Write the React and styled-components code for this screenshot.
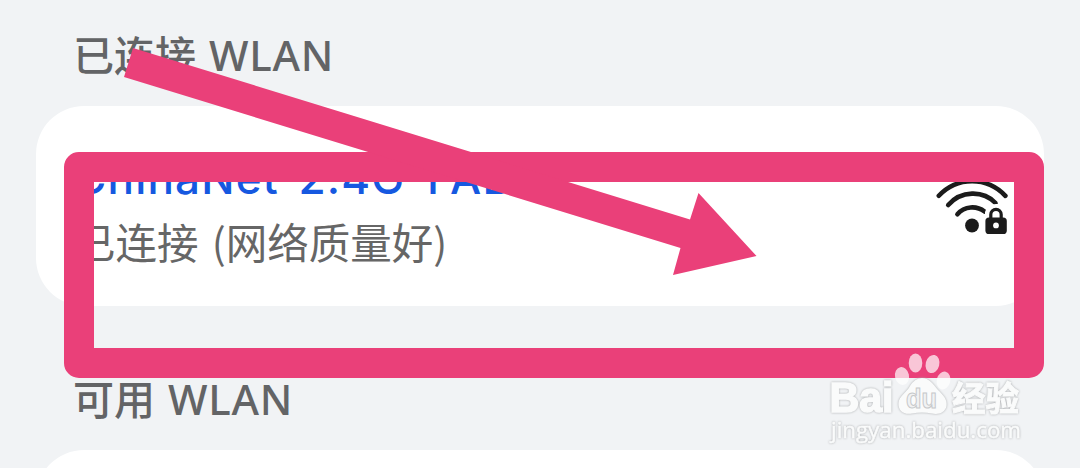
import styled, { createGlobalStyle } from "styled-components";

const GlobalStyle = createGlobalStyle`
    body {
        margin: 0;
        background: #F1F3F5;
        font-family: "Noto Sans", "Noto Sans CJK SC", sans-serif;
    }
`

const Screen = styled.main`
    position: relative;
    display: flex;
    flex-direction: column;
    box-sizing: border-box;
    width: 1080px;
    height: 468px;
    padding: 0px 36px;
    overflow: hidden;
    background: #F1F3F5;
`

const SectionTitle = styled.h2`
    display: flex;
    align-items: flex-end;
    flex: none;
    box-sizing: border-box;
    height: ${props => props.$height}px;
    margin: 0px;
    padding: 0px 0px 21px 37px;
    font-weight: 500;
    font-size: 41px;
    line-height: 60px;
    color: #636466;
    white-space: pre;
`

const Latin = styled.span`
    font-size: 42px;
    letter-spacing: 0.8px;
    margin-left: 13px;
`

const Card = styled.section`
    display: flex;
    justify-content: space-between;
    flex: none;
    box-sizing: border-box;
    height: 200px;
    padding: 41px 36px 0px 38px;
    border-radius: 48px;
    background: #FFFFFF;
`

const NetworkText = styled.div`
    display: flex;
    flex-direction: column;
    white-space: nowrap;
`

const NetworkName = styled.p`
    margin: 0px;
    font-family: Inter, sans-serif;
    font-weight: 500;
    font-size: 44px;
    line-height: 62px;
    letter-spacing: 1.2px;
    color: #1658E0;
`

const NetworkStatus = styled.p`
    margin: 0px;
    padding-top: 2px;
    font-family: "Noto Sans CJK SC", sans-serif;
    font-weight: 400;
    font-size: 41.5px;
    line-height: 60px;
    word-spacing: 4px;
    color: #666666;
`

const WifiIcon = styled.svg`
    width: 72px;
    height: 62px;
    margin-top: 27px;
`

const Frame = styled.div`
    position: absolute;
    left: 64px;
    top: 152px;
    box-sizing: border-box;
    width: 980px;
    height: 226px;
    border: 30px solid #EA4079;
    border-radius: 15px;
`

const Arrow = styled.svg`
    position: absolute;
    left: 120px;
    top: 40px;
    width: 640px;
    height: 240px;
`

const Watermark = styled.svg`
    position: absolute;
    left: 820px;
    top: 344px;
    width: 220px;
    height: 110px;
`

const Embossed = styled.g`
    fill: #FAFBFB;
    stroke: #FAFBFB;
    filter: drop-shadow(0px 0px 0.8px #A9ABAD);
`

const WifiLocked = () => (
    <WifiIcon viewBox="936 174 72 62" fill="none">
        <g stroke="#1B1B1B" strokeWidth="4.6" strokeLinecap="round">
            <path d="M938.8 195.8C957 176.4 987 176.4 1005.4 195.8" />
            <path d="M948.2 205C961 190.4 983 190 995.5 203" />
            <path d="M957.4 214.2C964.5 206 976.5 205.4 984.5 211.5" />
        </g>
        <circle cx="972" cy="225.5" r="6.9" fill="#1B1B1B" />
        <path d="M985 236V212Q988 204 996 204H1008V236Z" fill="#FFFFFF" />
        <path d="M990.8 219V214.5A5.2 5.2 0 0 1 1001.2 214.5V219" stroke="#1B1B1B" strokeWidth="3.2" />
        <rect x="985.4" y="217.4" width="21.4" height="16.6" rx="3.6" fill="#1B1B1B" />
        <circle cx="996" cy="225.4" r="2.9" fill="#FFFFFF" />
    </WifiIcon>
)

const BaiduWatermark = () => (
    <Watermark viewBox="820 344 220 110">
        <g fill="#FFFFFF" fillOpacity="0.7">
            <ellipse cx="902" cy="376" rx="7" ry="9" transform="rotate(-12 902 376)" />
            <ellipse cx="915.5" cy="363" rx="6.8" ry="9.4" />
            <ellipse cx="932.5" cy="364" rx="6.8" ry="9.2" transform="rotate(14 932.5 364)" />
            <ellipse cx="943.5" cy="380.5" rx="6.8" ry="9" transform="rotate(14 943.5 380.5)" />
        </g>
        <Embossed>
            <path strokeWidth="0" d="M922 378C929 378 933 384 938 390C943 395 947.500 399 946.500 406C945 413 938 415 932 413.500Q922 411.500 912 413.500C904 415 898 411 898.500 403C899 396 907 392 910 386Q915 378 922 378Z" />
            <text x="829.500" y="411.500" fontFamily="Liberation Sans, sans-serif" fontWeight="bold" fontSize="42" strokeWidth="1.6" textLength="64" lengthAdjust="spacingAndGlyphs">Bai</text>
            <text x="952" y="411" fontFamily="Noto Sans CJK SC, sans-serif" fontWeight="bold" fontSize="34" strokeWidth="1" textLength="67" lengthAdjust="spacingAndGlyphs">经验</text>
            <text x="831" y="438" fontFamily="Open Sans, sans-serif" fontWeight="400" fontSize="21" strokeWidth="0.5" textLength="190" lengthAdjust="spacingAndGlyphs">jingyan.baidu.com</text>
        </Embossed>
        <text x="906" y="408" fontFamily="Liberation Sans, sans-serif" fontWeight="bold" fontSize="27" fill="#F1F2F3" stroke="#C6C8CA" strokeWidth="1" textLength="31" lengthAdjust="spacingAndGlyphs">du</text>
    </Watermark>
)

const App = () => {
    return (
        <>
            <GlobalStyle />
            <Screen>
                <SectionTitle $height={106}>已连接<Latin>WLAN</Latin></SectionTitle>
                <Card>
                    <NetworkText>
                        <NetworkName>ChinaNet-2.4G-FAB</NetworkName>
                        <NetworkStatus>已连接 (网络质量好)</NetworkStatus>
                    </NetworkText>
                    <WifiLocked />
                </Card>
                <SectionTitle $height={144}>可用<Latin>WLAN</Latin></SectionTitle>
                <Card />
                <Frame />
                <Arrow viewBox="120 40 640 240">
                    <path d="M133 48L690 219.500L698.500 193L756.500 256L673 275L680.500 248L124 77Z" fill="#EA4079" />
                </Arrow>
                <BaiduWatermark />
            </Screen>
        </>
    )
}

export default App;
